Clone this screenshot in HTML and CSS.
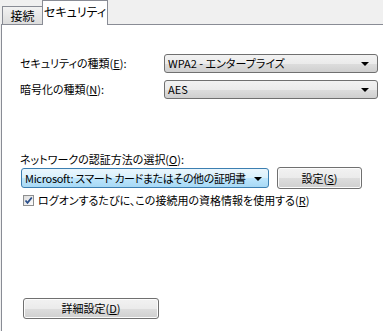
FILE: index.html
```html
<!DOCTYPE html>
<html lang="ja">
<head>
<meta charset="utf-8">
<link rel="stylesheet" href="styles.css">
</head>
<body>
<div class="tabs">
  <div class="tab">接続</div>
  <div class="tab active">セキュリティ</div>
</div>
<div class="panel">
  <div class="grid">
    <div class="label">セキュリティの種類(<u>E</u>):</div>
    <div class="combo"><span>WPA2 - エンタープライズ</span><i class="arrow"></i></div>
    <div class="label">暗号化の種類(<u>N</u>):</div>
    <div class="combo"><span>AES</span><i class="arrow"></i></div>
  </div>
  <div class="auth">
    <div class="label">ネットワークの認証方法の選択(<u>O</u>):</div>
    <div class="authrow">
      <div class="combo focus"><span class="tight"><span class="latin">Microsoft:</span> スマート カードまたはその他の証明書</span><i class="arrow"></i></div>
      <div class="btn settings">設定(<u>S</u>)</div>
    </div>
    <div class="check">
      <span class="box"><svg width="9" height="9" viewBox="0 0 9 9"><path d="M1.5 4.5 L3.5 6.8 L7.8 1.5" fill="none" stroke="#2a4e8a" stroke-width="1.8"/></svg></span>
      <span>ログオンするたびに、この接続用の資格情報を使用する(<u>R</u>)</span>
    </div>
  </div>
  <div class="btn advanced">詳細設定(<u>D</u>)</div>
</div>
</body>
</html>
```
FILE: styles.css
```css
html, body {
  margin: 0;
  padding: 0;
  background: #f0f0f0;
}
body {
  font-family: "Noto Sans CJK JP", sans-serif;
  font-size: 11px;
  color: #000;
  width: 383px;
  height: 331px;
  overflow: hidden;
  font-feature-settings: "palt";
}
u {
  text-decoration: underline;
  text-underline-offset: 1px;
}
.tabs {
  height: 24px;
  display: flex;
  align-items: flex-end;
  padding-left: 2px;
  box-sizing: border-box;
}
.tab {
  box-sizing: border-box;
  height: 18px;
  width: 41px;
  border: 1px solid #898c95;
  border-bottom: none;
  background: linear-gradient(#f2f2f2, #dcdcdc);
  display: flex;
  align-items: center;
  justify-content: center;
  font-size: 12px;
  line-height: 1;
  padding-top: 1px;
}
.tab.active {
  width: 66px;
  margin-left: -1px;
  background: #fff;
  margin-bottom: -1px;
  height: 25px;
  position: relative;
  z-index: 1;
  padding-bottom: 4px;
}
.panel {
  background: #fff;
  border-top: 1px solid #898c95;
  border-left: 1px solid #898c95;
  margin-left: 1px;
  height: 307px;
  box-sizing: border-box;
  padding: 29px 0 0 18px;
}
.grid {
  display: grid;
  grid-template-columns: 144px 214px;
  row-gap: 7px;
  align-items: center;
}
.label {
  font-size: 11px;
  line-height: 13px;
}
.combo {
  box-sizing: border-box;
  height: 19px;
  border: 1px solid #707070;
  border-radius: 3px;
  background: linear-gradient(#f2f2f2 0%, #ebebeb 50%, #dddddd 51%, #cfcfcf 100%);
  display: flex;
  align-items: center;
  padding: 0 0 0 3px;
}
.combo span {
  white-space: nowrap;
  line-height: 1;
}
.combo > span {
  flex: 1;
}
.tight {
  letter-spacing: -0.4px;
}
.latin {
  letter-spacing: -0.3px;
}
.arrow {
  width: 0;
  height: 0;
  border-left: 4px solid transparent;
  border-right: 4px solid transparent;
  border-top: 4px solid #000;
  margin: 1px 8px 0 4px;
}
.auth {
  margin-top: 54px;
}
.authrow {
  display: flex;
  align-items: center;
  gap: 8px;
  margin-top: 1px;
  margin-left: 1px;
}
.combo.focus {
  width: 248px;
  height: 20px;
  border-color: #3c7fb1;
  background: linear-gradient(#eaf6fd 0%, #d9f0fc 50%, #bee6fd 51%, #a7d9f5 100%);
}
.combo.focus .arrow {
  margin-right: 6px;
}
.btn {
  box-sizing: border-box;
  border: 1px solid #707070;
  border-radius: 3px;
  background: linear-gradient(#f2f2f2 0%, #ebebeb 50%, #dddddd 51%, #cfcfcf 100%);
  box-shadow: inset 0 0 0 1px #fcfcfc;
  display: flex;
  align-items: center;
  justify-content: center;
  line-height: 1;
}
.settings {
  width: 85px;
  height: 22px;
}
.check {
  display: flex;
  align-items: center;
  gap: 4px;
  margin-top: 5px;
  margin-left: 3px;
  line-height: 13px;
}
.box {
  box-sizing: border-box;
  width: 11px;
  height: 11px;
  border: 1px solid #8e8f8f;
  background: linear-gradient(135deg, #dcdcdc, #fdfdfd);
  display: flex;
  align-items: center;
  justify-content: center;
}
.advanced {
  width: 136px;
  height: 21px;
  margin-top: 91px;
  margin-left: 3px;
}
```
